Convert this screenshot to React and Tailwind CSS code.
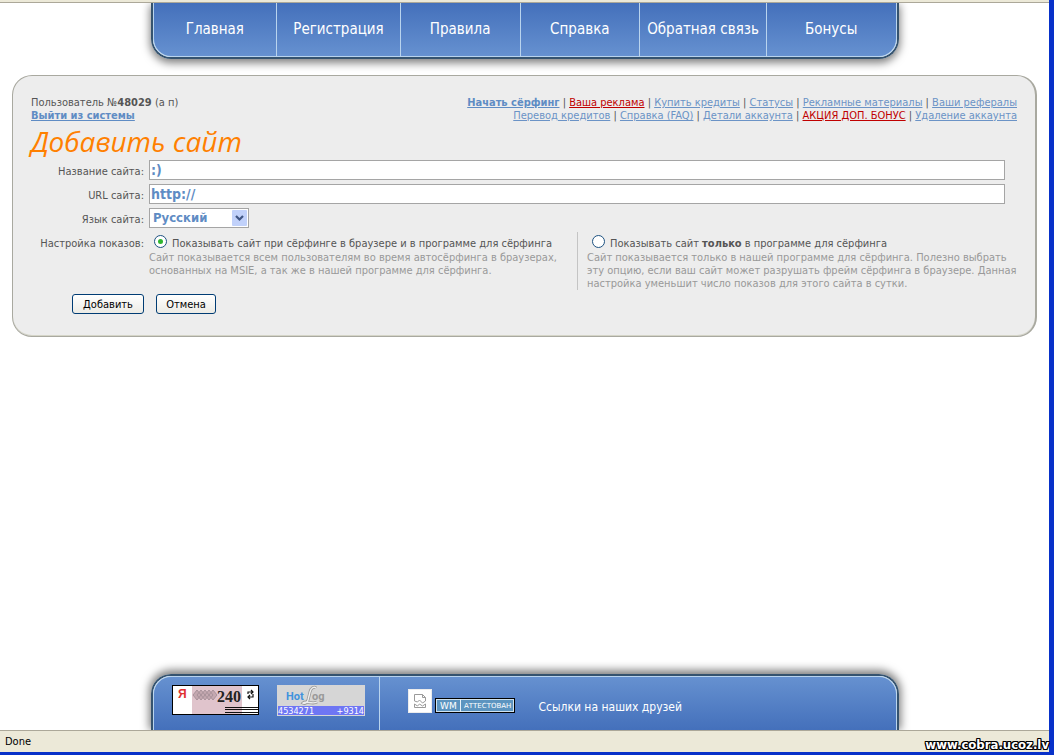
import React, { useState } from 'react';

const navItems = ['Главная', 'Регистрация', 'Правила', 'Справка', 'Обратная связь', 'Бонусы'];

const userLinks = [
  [
    { text: 'Начать сёрфинг', kind: 'bold' },
    { text: 'Ваша реклама', kind: 'red' },
    { text: 'Купить кредиты' },
    { text: 'Статусы' },
    { text: 'Рекламные материалы' },
    { text: 'Ваши рефералы' },
  ],
  [
    { text: 'Перевод кредитов' },
    { text: 'Справка (FAQ)' },
    { text: 'Детали аккаунта' },
    { text: 'АКЦИЯ ДОП. БОНУС', kind: 'red' },
    { text: 'Удаление аккаунта' },
  ],
];

const linkStyles = {
  bold: 'font-bold text-[#5f8cc4] underline',
  red: 'text-[#c00000] underline',
  normal: 'text-[#6b93c6] underline',
};

const inputClass =
  'h-5 w-full border border-[#a5a5a5] bg-white px-px text-[14px] font-bold text-[#5f8cc4] outline-none';

const radioClass =
  "flex size-[13px] shrink-0 appearance-none items-center justify-center rounded-full border border-[#1d5281] bg-white checked:before:size-[5px] checked:before:rounded-full checked:before:bg-[#2fb52f] checked:before:content-['']";

const buttonClass =
  'h-5 rounded-[3px] border border-[#003c74] bg-linear-to-b from-white to-[#ecebe5] text-center text-[11px] leading-[13px] text-black';

const Nav = () => (
  <nav className="mx-auto w-full max-w-[748px] rounded-b-[20px] border-2 border-t-0 border-[#35536f] shadow-[0_3px_8px_1px_rgba(0,0,0,0.5)]">
    <ul className="grid h-[54px] grid-cols-[124fr_124fr_120fr_120fr_127fr_129fr] overflow-hidden rounded-b-[18px] border border-t-0 border-[#b9d4ee] bg-linear-to-b from-[#4470bb] to-[#6691d0]">
      {navItems.map((item) => (
        <li key={item} className="flex border-r border-[#b9d4ee] last:border-r-0">
          <a
            href="#"
            className="flex flex-1 items-center justify-center text-[15px] whitespace-nowrap text-white"
          >
            {item}
          </a>
        </li>
      ))}
    </ul>
  </nav>
);

const UserBar = () => (
  <div className="flex justify-between">
    <div>
      <p>
        Пользователь №<b>48029</b> (а п)
      </p>
      <a href="#" className="font-bold text-[#5f8cc4] underline">
        Выйти из системы
      </a>
    </div>
    <div className="text-right">
      {userLinks.map((row, i) => (
        <p key={i}>
          {row.map((link, j) => (
            <React.Fragment key={link.text}>
              {j > 0 && ' | '}
              <a href="#" className={linkStyles[link.kind || 'normal']}>
                {link.text}
              </a>
            </React.Fragment>
          ))}
        </p>
      ))}
    </div>
  </div>
);

const AddSiteForm = () => {
  const [formData, setFormData] = useState({
    title: ':)',
    url: 'http://',
    lang: 'ru',
    mode: 'all',
  });

  const handleChange = (e) => {
    const { name, value } = e.target;
    setFormData({
      ...formData,
      [name]: value,
    });
  };

  const handleSubmit = (e) => {
    e.preventDefault();
  };

  return (
    <form onSubmit={handleSubmit} className="pr-3">
      <div className="grid grid-cols-[113px_1fr] gap-x-[5px] gap-y-1">
        <label htmlFor="title" className="pt-[5px] text-right">
          Название сайта:
        </label>
        <input
          id="title"
          type="text"
          name="title"
          value={formData.title}
          onChange={handleChange}
          className={inputClass}
          autoFocus
        />
        <label htmlFor="url" className="pt-[5px] text-right">
          URL сайта:
        </label>
        <input
          id="url"
          type="text"
          name="url"
          value={formData.url}
          onChange={handleChange}
          className={inputClass}
        />
        <label htmlFor="lang" className="pt-[5px] text-right">
          Язык сайта:
        </label>
        <div className="grid w-[100px]">
          <select
            id="lang"
            name="lang"
            value={formData.lang}
            onChange={handleChange}
            className="col-start-1 row-start-1 h-5 appearance-none border border-[#a5a5a5] bg-white px-[3px] text-[13px] leading-4 font-bold text-[#5f8cc4]"
          >
            <option value="ru">Русский</option>
            <option value="en">English</option>
          </select>
          <svg
            className="pointer-events-none col-start-1 row-start-1 mr-0.5 self-center justify-self-end"
            width="15"
            height="16"
            viewBox="0 0 15 16"
          >
            <rect width="15" height="16" rx="1" fill="#c1d1fa" />
            <path d="M4 6l3.5 3.5L11 6" fill="none" stroke="#3f5583" strokeWidth="2.2" />
          </svg>
        </div>
        <span className="pt-[5px] text-right whitespace-nowrap">Настройка показов:</span>
        <div className="grid grid-cols-2">
          <div>
            <div className="flex h-[19px] items-center gap-[5px] pl-[5px]">
              <input
                id="mode-all"
                type="radio"
                name="mode"
                value="all"
                checked={formData.mode === 'all'}
                onChange={handleChange}
                className={radioClass}
              />
              <label htmlFor="mode-all" className="pt-1 whitespace-nowrap">
                Показывать сайт при сёрфинге в браузере и в программе для сёрфинга
              </label>
            </div>
            <p className="pr-4 text-[#999999]">
              Сайт показывается всем пользователям во время автосёрфинга в браузерах, основанных на
              MSIE, а так же в нашей программе для сёрфинга.
            </p>
          </div>
          <div className="border-l border-[#c4c4c4] pl-[9px]">
            <div className="flex h-[19px] items-center gap-[5px] pl-[5px]">
              <input
                id="mode-program"
                type="radio"
                name="mode"
                value="program"
                checked={formData.mode === 'program'}
                onChange={handleChange}
                className={radioClass}
              />
              <label htmlFor="mode-program" className="pt-1 whitespace-nowrap">
                Показывать сайт <b>только</b> в программе для сёрфинга
              </label>
            </div>
            <p className="-mr-4 text-[#999999]">
              Сайт показывается только в нашей программе для сёрфинга. Полезно выбрать эту опцию,
              если ваш сайт может разрушать фрейм сёрфинга в браузере. Данная настройка уменьшит
              число показов для этого сайта в сутки.
            </p>
          </div>
        </div>
      </div>
      <div className="mt-1 flex gap-3 pl-[41px]">
        <button type="submit" className={`${buttonClass} w-[72px]`}>
          Добавить
        </button>
        <button type="button" className={`${buttonClass} w-[60px]`}>
          Отмена
        </button>
      </div>
    </form>
  );
};

const YandexCounter = () => (
  <svg width="88" height="31" viewBox="0 0 88 31">
    <rect x="0.5" y="0.5" width="86" height="29" fill="#fff" stroke="#000" />
    <rect x="20" y="1" width="50" height="28" fill="#e0c4cc" />
    <path
      d="M21 10l4-5 4 5-4 5zM29 10l4-5 4 5-4 5zM37 10l4-5 4 5-4 5zM25 10l4-5 4 5-4 5zM33 10l4-5 4 5-4 5z"
      fill="#c4a8b0"
      stroke="#a8929a"
    />
    <text x="6" y="13" fontFamily="Liberation Sans, sans-serif" fontWeight="bold" fontSize="12" fill="#e03030">
      Я
    </text>
    <text x="45" y="17" fontFamily="Liberation Serif, serif" fontWeight="bold" fontSize="16" fill="#222">
      240
    </text>
    <path d="M53 22.5h33M53 24.5h33M53 27.5h33" stroke="#111" />
    <path d="M76 9V7h5M79 5l2 2-2 2M81 9v3h-5M78 10l-2 2 2 2" fill="none" stroke="#111" strokeWidth="1.2" />
  </svg>
);

const HotLogCounter = () => (
  <svg width="88" height="31" viewBox="0 0 88 31">
    <rect width="88" height="31" fill="#d6d6d6" />
    <rect x="1" y="21" width="86" height="9" fill="#6e76f4" />
    <text x="9" y="15" fontFamily="Roboto, sans-serif" fontWeight="bold" fontSize="11" fill="#3f92dd">
      Hot
    </text>
    <path
      d="M39 3c-2-2-5 0-6 4l-2 8c-1 3-3 4-5 3 3-3 9 2 14-1"
      fill="none"
      stroke="#999"
      strokeWidth="3"
    />
    <path
      d="M39 3c-2-2-5 0-6 4l-2 8c-1 3-3 4-5 3 3-3 9 2 14-1"
      fill="none"
      stroke="#eee"
      strokeWidth="1.4"
    />
    <text x="35" y="15" fontFamily="Roboto, sans-serif" fontWeight="bold" fontSize="11" fill="#999">
      og
    </text>
    <g fontFamily="DejaVu Sans Condensed, sans-serif" fontSize="9" fill="#fff">
      <text x="1" y="29">4534271</text>
      <text x="87" y="29" textAnchor="end">
        +9314
      </text>
    </g>
  </svg>
);

const BrokenImage = () => (
  <svg width="24" height="24" viewBox="0 0 24 24">
    <rect x="0.5" y="0.5" width="23" height="23" fill="#fff" stroke="#ececec" />
    <path
      d="M6.5 12V5.500h8l3 3V12l-3 2-3-3-2 2zM14.500 5.500v3h3M6.500 15l3 2 2-2 3 2 3-2v3.500h-11z"
      fill="none"
      stroke="#9a9a9a"
    />
  </svg>
);

const WebMoneyBadge = () => (
  <svg width="80" height="15" viewBox="0 0 80 15">
    <rect x="0.5" y="0.5" width="79" height="14" fill="#5c94c0" stroke="#000" />
    <rect x="1.500" y="1.500" width="77" height="12" fill="none" stroke="#cfe2f0" />
    <path d="M25.500 1v13" stroke="#e6f0f8" />
    <g fontFamily="DejaVu Sans, sans-serif" fill="#fff">
      <text x="5" y="11" fontSize="9">
        WM
      </text>
      <text x="29" y="10" fontSize="7">
        АТТЕСТОВАН
      </text>
    </g>
  </svg>
);

const Footer = () => (
  <footer className="mx-auto w-full max-w-[748px] rounded-t-[20px] border-2 border-b-0 border-[#35536f] shadow-[0_-2px_8px_2px_rgba(0,0,0,0.5)]">
    <div className="flex h-[54px] rounded-t-[18px] border border-b-0 border-[#b9d4ee] bg-linear-to-b from-[#6691d0] to-[#4470bb]">
      <div className="flex w-[226px] gap-[17px] border-r border-[#b9d4ee] pt-2 pl-[18px]">
        <YandexCounter />
        <HotLogCounter />
      </div>
      <div className="flex items-start pt-3 pl-7 text-white">
        <div className="flex items-end gap-[3px]">
          <BrokenImage />
          <WebMoneyBadge />
        </div>
        <p className="pt-3 pl-6 text-[12px]">Ссылки на наших друзей</p>
      </div>
    </div>
  </footer>
);

const App = () => {
  return (
    <div className="relative flex min-h-screen flex-col border-r-[5px] border-b-[3px] border-[#0831c9] bg-white font-['DejaVu_Sans_Condensed','DejaVu_Sans',sans-serif] text-[11px] leading-[13px] text-[#555555]">
      <div className="h-[3px] border-b border-[#aca899] bg-[#ece9d8]"></div>
      <div className="flex flex-1 flex-col overflow-hidden">
        <Nav />
        <main className="mx-3 mt-4 flex-1">
          <section className="rounded-[20px] border border-r-2 border-[#a9a9a0] bg-[#ededed] px-[18px] pt-5 pb-[22px] shadow-[inset_0_-1px_0_#d5d5c8]">
            <UserBar />
            <h1 className="my-1 font-['Open_Sans',sans-serif] text-[28px] leading-[30px] text-[#ff8000] italic">
              Добавить сайт
            </h1>
            <AddSiteForm />
          </section>
        </main>
        <Footer />
      </div>
      <div className="flex h-[22px] items-center border-t border-[#aca899] bg-[#ece9d8] pl-[5px] text-black">
        Done
      </div>
      <div className="absolute right-0 bottom-0 text-[13px] leading-[14px] font-bold text-white [text-shadow:1px_0_#000,-1px_0_#000,0_1px_#000,0_-1px_#000,1px_1px_#000,-1px_-1px_#000,1px_-1px_#000,-1px_1px_#000]">
        www.cobra.ucoz.lv
      </div>
    </div>
  );
};

export default App;
